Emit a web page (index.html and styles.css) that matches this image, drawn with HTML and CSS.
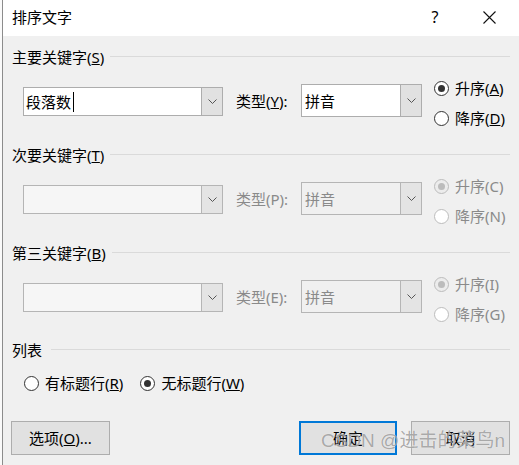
FILE: index.html
```html
<!DOCTYPE html>
<html lang="zh-CN">
<head>
<meta charset="utf-8">
<title>排序文字</title>
<link rel="stylesheet" href="styles.css">
</head>
<body>
<div class="window">
  <div class="titlebar">
    <span class="title">排序文字</span>
    <span class="help">?</span>
    <span class="close">
      <svg width="13" height="13" viewBox="0 0 13 13"><path d="M0.5 0.5 L12.5 12.5 M12.5 0.5 L0.5 12.5" stroke="#111" stroke-width="1.1" fill="none"/></svg>
    </span>
  </div>
  <div class="content">
    <section class="group">
      <div class="group-head"><span>主要关键字(<u>S</u>)</span><i class="rule"></i></div>
      <div class="sort-row">
        <div class="combo key"><span class="value">段落数<span class="caret"></span></span><span class="drop"><svg width="9" height="5" viewBox="0 0 9 5"><polyline points="0.5,0.5 4.5,4.5 8.5,0.5" fill="none" stroke="#555" stroke-width="1"/></svg></span></div>
        <span class="type-label">类型(<u>Y</u>):</span>
        <div class="combo type"><span class="value">拼音</span><span class="drop"><svg width="9" height="5" viewBox="0 0 9 5"><polyline points="0.5,0.5 4.5,4.5 8.5,0.5" fill="none" stroke="#555" stroke-width="1"/></svg></span></div>
        <div class="order">
          <label class="radio checked"><i class="dot"></i><span>升序(<u>A</u>)</span></label>
          <label class="radio"><i class="dot"></i><span>降序(<u>D</u>)</span></label>
        </div>
      </div>
    </section>
    <section class="group">
      <div class="group-head"><span>次要关键字(<u>T</u>)</span><i class="rule"></i></div>
      <div class="sort-row disabled">
        <div class="combo key"><span class="value"></span><span class="drop"><svg width="9" height="5" viewBox="0 0 9 5"><polyline points="0.5,0.5 4.5,4.5 8.5,0.5" fill="none" stroke="#555" stroke-width="1"/></svg></span></div>
        <span class="type-label">类型(P):</span>
        <div class="combo type"><span class="value">拼音</span><span class="drop"><svg width="9" height="5" viewBox="0 0 9 5"><polyline points="0.5,0.5 4.5,4.5 8.5,0.5" fill="none" stroke="#555" stroke-width="1"/></svg></span></div>
        <div class="order">
          <label class="radio checked"><i class="dot"></i><span>升序(C)</span></label>
          <label class="radio"><i class="dot"></i><span>降序(N)</span></label>
        </div>
      </div>
    </section>
    <section class="group">
      <div class="group-head"><span>第三关键字(<u>B</u>)</span><i class="rule"></i></div>
      <div class="sort-row disabled short">
        <div class="combo key"><span class="value"></span><span class="drop"><svg width="9" height="5" viewBox="0 0 9 5"><polyline points="0.5,0.5 4.5,4.5 8.5,0.5" fill="none" stroke="#555" stroke-width="1"/></svg></span></div>
        <span class="type-label">类型(E):</span>
        <div class="combo type"><span class="value">拼音</span><span class="drop"><svg width="9" height="5" viewBox="0 0 9 5"><polyline points="0.5,0.5 4.5,4.5 8.5,0.5" fill="none" stroke="#555" stroke-width="1"/></svg></span></div>
        <div class="order">
          <label class="radio checked"><i class="dot"></i><span>升序(I)</span></label>
          <label class="radio"><i class="dot"></i><span>降序(G)</span></label>
        </div>
      </div>
    </section>
    <section class="group">
      <div class="group-head"><span>列表</span><i class="rule"></i></div>
      <div class="list-row">
        <label class="radio"><i class="dot"></i><span>有标题行(<u>R</u>)</span></label>
        <label class="radio checked"><i class="dot"></i><span>无标题行(<u>W</u>)</span></label>
      </div>
    </section>
    <div class="buttons">
      <button class="btn">选项(<u>O</u>)...</button>
      <button class="btn primary">确定</button>
      <button class="btn">取消</button>
    </div>
  </div>
  <div class="watermark">CSDN @进击的菜鸟n</div>
</div>
</body>
</html>
```

FILE: styles.css
```css
html, body {
  margin: 0;
  padding: 0;
}
body {
  background: #fafafa;
  font-family: "Noto Sans", "Noto Sans CJK SC", sans-serif;
  font-size: 15px;
  color: #000;
  width: 519px;
  height: 465px;
  overflow: hidden;
}
.window {
  position: relative;
  margin-left: 2px;
  border-left: 1px solid #8c8c8c;
  height: 465px;
  background: #f0f0f0;
  display: flex;
  flex-direction: column;
}
.titlebar {
  height: 36px;
  background: #fff;
  display: flex;
  align-items: center;
  padding-left: 9px;
  flex: none;
}
.title {
  line-height: 20px;
  margin-top: -2px;
}
.help {
  margin-left: auto;
  width: 20px;
  text-align: center;
  font-size: 16px;
  line-height: 20px;
  margin-top: -2px;
}
.close {
  width: 46px;
  margin-left: 21px;
  margin-right: 7px;
  display: flex;
  justify-content: center;
  margin-top: -2px;
}
.content {
  padding: 0 9px;
  flex: 1;
}
.group-head {
  height: 20px;
  line-height: 20px;
  display: flex;
  align-items: center;
  margin-top: 11px;
  white-space: nowrap;
}
.group + .group .group-head {
  margin-top: 0;
}
.rule {
  flex: 1;
  height: 1px;
  background: #dadada;
  margin-left: 6px;
  margin-top: -1px;
}
.group:last-of-type .rule {
  margin-left: 9px;
}
.sort-row {
  height: 78px;
  display: flex;
  align-items: flex-start;
}
.sort-row.short {
  height: 77px;
}
.combo {
  box-sizing: border-box;
  display: flex;
  border: 1px solid #adadad;
  background: #fff;
}
.combo.key {
  margin-left: 11px;
  margin-top: 20px;
  width: 200px;
  height: 29px;
}
.combo.type {
  margin-top: 17px;
  width: 121px;
  height: 33px;
}
.combo .value {
  flex: 1;
  display: flex;
  align-items: center;
  padding-left: 2px;
  line-height: 20px;
}
.combo.type .value {
  padding-left: 3px;
}
.caret {
  display: inline-block;
  width: 1px;
  height: 20px;
  background: #000;
  margin-left: 2px;
}
.drop {
  width: 20px;
  background: #e1e1e1;
  border-left: 1px solid #adadad;
  display: flex;
  align-items: center;
  justify-content: center;
}
.type-label {
  margin-left: 13px;
  margin-top: 24px;
  width: 65px;
  line-height: 20px;
  white-space: nowrap;
}
.order {
  margin-left: 12px;
  margin-top: 6px;
  display: flex;
  flex-direction: column;
}
.radio {
  display: flex;
  align-items: center;
  gap: 6px;
  height: 30px;
  line-height: 20px;
  white-space: nowrap;
}
.dot {
  box-sizing: border-box;
  width: 15px;
  height: 15px;
  border: 1px solid #333;
  border-radius: 50%;
  background: #fff;
  display: flex;
  align-items: center;
  justify-content: center;
}
.radio.checked .dot::after {
  content: "";
  width: 7px;
  height: 7px;
  border-radius: 50%;
  background: #333;
}
.disabled {
  color: #8a8a8a;
}
.disabled .combo {
  border-color: #b5b5b5;
}
.disabled .combo.key {
  background: #f6f6f6;
}
.disabled .combo.type {
  background: #f0f0f0;
}
.disabled .drop {
  background: #e4e4e4;
  border-left-color: #b5b5b5;
}
.disabled .dot {
  border-color: #bcbcbc;
}
.disabled .radio.checked .dot {
  background: #ececec;
}
.disabled .radio.checked .dot::after {
  background: #bcbcbc;
}
.list-row {
  display: flex;
  align-items: center;
  gap: 17px;
  height: 20px;
  margin-top: 13px;
  margin-left: 12px;
}
.buttons {
  display: flex;
  margin-top: 28px;
  margin-left: -1px;
}
.btn {
  box-sizing: border-box;
  height: 34px;
  width: 99px;
  background: #e1e1e1;
  border: 1px solid #adadad;
  font-family: "Noto Sans", "Noto Sans CJK SC", sans-serif;
  font-size: 15px;
  color: #000;
  padding: 0;
  line-height: 20px;
}
.btn.primary {
  margin-left: auto;
  width: 98px;
  border: 2px solid #0078d7;
}
.btn.primary + .btn {
  margin-left: 14px;
}
.watermark {
  position: absolute;
  left: 318px;
  top: 429px;
  font-family: "Liberation Sans", "Noto Sans CJK SC", sans-serif;
  font-size: 19px;
  line-height: 24px;
  color: rgba(100, 100, 100, 0.55);
  text-shadow: 0 0 1px rgba(255, 255, 255, 0.9);
  white-space: nowrap;
  pointer-events: none;
}
```
